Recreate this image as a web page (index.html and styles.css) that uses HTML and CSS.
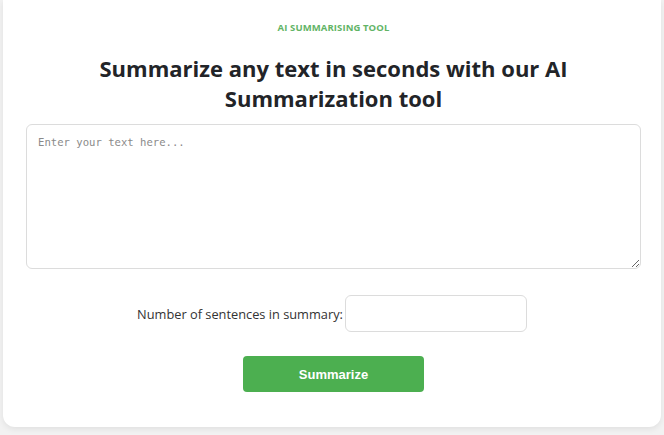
FILE: index.html
```html
<!DOCTYPE html>
<html lang="en">
<head>
<meta charset="utf-8">
<title>AI Summarising Tool</title>
<link rel="stylesheet" href="styles.css">
</head>
<body>
<main class="card">
  <p class="eyebrow">AI SUMMARISING TOOL</p>
  <h1 class="title">Summarize any text in seconds with our AI Summarization tool</h1>
  <textarea class="text-input" placeholder="Enter your text here..."></textarea>
  <div class="count-row">
    <label class="count-label" for="count">Number of sentences in summary:</label>
    <input class="count-input" id="count" type="text">
  </div>
  <button class="submit" type="button">Summarize</button>
</main>
</body>
</html>
```
FILE: styles.css
```css
html, body {
  margin: 0;
  padding: 0;
  background: #f2f2f2;
}
body {
  padding: 0 3px 8px;
  font-family: "Open Sans", "Noto Sans", sans-serif;
}
.card {
  background: #ffffff;
  border-radius: 0 0 12px 12px;
  box-shadow: 0 2px 6px rgba(0, 0, 0, 0.08);
  padding: 22px 20px 35px 23px;
  display: flex;
  flex-direction: column;
  align-items: center;
  box-sizing: border-box;
  min-height: 427px;
}
.eyebrow {
  margin: 0;
  font-size: 9.5px;
  line-height: 12px;
  font-weight: 700;
  color: #62b466;
  letter-spacing: 0.1px;
}
.title {
  margin: 19px 0 0;
  font-size: 22px;
  line-height: 30px;
  font-weight: 700;
  color: #222428;
  text-align: center;
  max-width: 520px;
}
.text-input {
  margin-top: 11px;
  width: 615px;
  height: 145px;
  box-sizing: border-box;
  border: 1px solid #dcdcdc;
  border-radius: 6px;
  padding: 11px 11px;
  font-family: "DejaVu Sans Mono", monospace;
  font-size: 10.6px;
  resize: vertical;
  align-self: flex-start;
}
.text-input::placeholder {
  color: #8a8a8a;
}
.count-row {
  margin-top: 26px;
  display: flex;
  align-items: center;
  justify-content: center;
  gap: 2px;
  margin-left: -3px;
}
.count-label {
  font-size: 12.8px;
  color: #333;
}
.count-input {
  width: 182px;
  height: 37px;
  box-sizing: border-box;
  border: 1px solid #dcdcdc;
  border-radius: 6px;
  padding: 0 8px;
}
.submit {
  margin-top: 24px;
  width: 181px;
  height: 36px;
  border: none;
  border-radius: 4px;
  background: #4caf50;
  color: #ffffff;
  font-family: "Liberation Sans", Arial, sans-serif;
  font-size: 13px;
  font-weight: 700;
}
```
